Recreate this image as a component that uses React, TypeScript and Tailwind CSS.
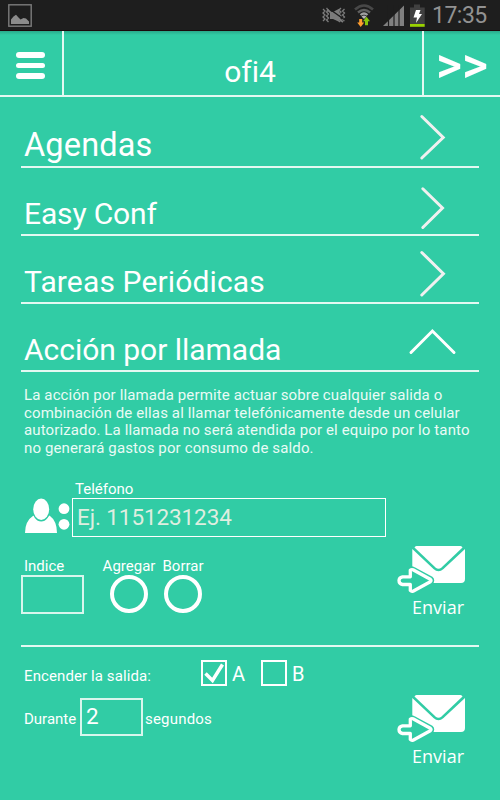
import clsx from "clsx";

const sections = [
  {
    name: "Agendas",
    row: "h-[71px] pb-[3px]",
    text: "text-[32.5px] tracking-[0.15px]",
    icon: "M171.8 17.5 193.2 38.5 171.8 59",
    open: false,
  },
  {
    name: "Easy Conf",
    row: "h-[68px] pb-[2px]",
    text: "text-[30px] tracking-[-0.15px]",
    icon: "M172.8 20.8 192.5 40 172.8 59.5",
    open: false,
  },
  {
    name: "Tareas Periódicas",
    row: "h-[68px] pb-[2px]",
    text: "text-[30px] tracking-[0.14px]",
    icon: "M171.8 16.5 193.4 37.7 171.8 59",
    open: false,
  },
  {
    name: "Acción por llamada",
    row: "h-[68px] pb-[2px]",
    text: "text-[30px] tracking-[-0.02px]",
    icon: "M161 48.5 182.4 27 204 48.5",
    open: true,
  },
];

function StatusBar() {
  return (
    <div className="flex h-[31px] items-start border-b border-[#1b080c] bg-[#1e1e1e] pl-2">
      <svg className="mt-1 h-[23px] w-6" viewBox="0 0 24 23">
        <rect x="0.8" y="0.8" width="22.4" height="21.4" fill="#1e1e1e" stroke="#7c7c7c" strokeWidth="1.4" />
        <path d="M3 20V15.5L5.5 12.5 8 10.8 10.5 13.5 12.5 15.5 15.5 14 18 14.5 21 17.5V20Z" fill="#8b8b8b" />
      </svg>
      <svg className="ml-auto mt-[3px] h-[26px] w-[103px]" viewBox="322 3 103 26">
        {/* vibrate */}
        <g fill="none" stroke="#7c7c7c" strokeWidth="1.3">
          <path d="M323 9l2 2-2 2 2 2-2 2 2 2-2 2M326.5 8l2 2-2 2 2 2-2 2 2 2-2 2 2 2" />
          <path d="M344.5 9l-2 2 2 2-2 2 2 2-2 2 2 2M341 8l-2 2 2 2-2 2 2 2-2 2 2 2-2 2" />
        </g>
        <path d="M330 12h3l6.5-3.5v13.500L333 19h-3Z" fill="#7c7c7c" />
        <path d="M328 8 345 20" stroke="#1e1e1e" strokeWidth="1.4" />
        <path d="M327 9.5 343 22" stroke="#7c7c7c" strokeWidth="1.8" />
        {/* wifi */}
        <g fill="none">
          <path d="M355 9.5q9-8 18 0" stroke="#484848" strokeWidth="2.6" />
          <path d="M358 12.5q6-5 12 0" stroke="#606060" strokeWidth="2.4" />
          <path d="M360.5 15q3.5-3 7 0" stroke="#a0a0a0" strokeWidth="2.2" />
        </g>
        <path d="M361.5 16.5q2.5-2 5 0L364 19Z" fill="#b4b4b4" />
        <path d="M359.2 19h3v3.5h2l-3.5 4.5-3.5-4.5h2Z" fill="#ff9d2e" />
        <path d="M365 25.2v-4h-2l3.5-4.4 3.5 4.4h-2v4Z" fill="#86c40b" />
        {/* signal */}
        <path d="M383 26 404 5.5V26Z" fill="#808080" />
        <path d="M388.5 5V26M394 5V26M399 5V26" stroke="#1e1e1e" strokeWidth="1.2" />
        {/* battery */}
        <path d="M414 4.5h6v3h4.7v16.500h-14.700V7.500h4Z" fill="#404040" />
        <path d="M410 24h14.700v2.800h-14.700Z" fill="#99d100" />
        <path d="M416 10h4.500l-1.500 4h3l-6 9 1-5.500h-3.500Z" fill="#fff" />
      </svg>
      <span className="ml-[7px] mr-[13px] mt-[2px] w-[55px] text-[23px] leading-[27px] tracking-[-0.5px] text-[#929292]">
        17:35
      </span>
    </div>
  );
}

function Header() {
  return (
    <header className="flex h-[66px] border-b-2 border-[#e3f9f2] bg-linear-to-b from-[#2aa98b] from-0% to-[#31cca5] to-[4px]">
      <button className="flex w-[64px] flex-col gap-[5px] border-r-2 border-[#e3f9f2] pl-4 pt-[21px]">
        <span className="h-[5.5px] w-[29px] rounded-full bg-white" />
        <span className="h-[5.5px] w-[29px] rounded-full bg-white" />
        <span className="h-[5.5px] w-[29px] rounded-full bg-white" />
      </button>
      <h1 className="flex-1 pl-[14px] pt-[23px] text-center text-[30px] leading-9 [font-variant-ligatures:none]">
        ofi4
      </h1>
      <button className="w-[78px] border-l-2 border-[#e3f9f2] pt-[3px] text-center text-[50px] font-medium leading-[60px]">
        &gt;&gt;
      </button>
    </header>
  );
}

function SendButton() {
  return (
    <button className="flex w-[70px] flex-col items-end">
      <svg className="h-[49px] w-[70px]" viewBox="397 545 70 49">
        <path d="M412.3 549 433.5 569q5 4.5 10 0L465 549V579q0 4-4 4H412.3Z" fill="#fff" />
        <path d="M414.5 547.5Q415 546 416.5 546H460.5Q462 546 462.5 547.5L441.5 567.5q-3 2.5-6 0Z" fill="#fff" />
        <path
          d="M401.5 577H408.5V570.5Q410.5 567.5 413.5 569.5L430.5 578.5Q433 580.5 430.5 582.5L413.5 591.5Q410.5 592.5 409 590V585H401.5Q398.5 584 398.5 581 398.5 578 401.5 577Z"
          fill="#31cca5"
          stroke="#31cca5"
          strokeWidth="5"
        />
        <path
          d="M402.5 576.8H410.3V570.300Q411.500 569.200 413 569.800L430.300 579.200Q431.800 580.500 430.300 581.800L413 591.200Q411.500 591.800 410.300 590.500V584.500H402.500Q399 584 399 580.600 399 577.500 402.500 576.800Z"
          fill="#31cca5"
          stroke="#fff"
          strokeWidth="3.3"
          strokeLinejoin="round"
        />
      </svg>
      <span className="mr-[3px] mt-px font-['Open_Sans'] text-[18px] leading-6">Enviar</span>
    </button>
  );
}

function Checkbox({ label, checked }: { label: string; checked: boolean }) {
  return (
    <label className="flex items-center gap-[5px]">
      <span className="flex h-[26px] w-[26px] items-center justify-center border-[2.5px] border-white">
        {checked && (
          <svg className="h-[22px] w-[22px] shrink-0" viewBox="0 0 22 22">
            <path d="M2.5 11.5 9.5 18.5 19.5 2.5" fill="none" stroke="#fff" strokeWidth="3.5" />
          </svg>
        )}
      </span>
      <span className="pt-[2px] text-[20px] leading-6">{label}</span>
    </label>
  );
}

export default function App() {
  return (
    <div className="flex h-[800px] w-[500px] flex-col overflow-hidden bg-[#31cca5] font-[Roboto,sans-serif] text-white">
      <StatusBar />
      <Header />

      <main className="flex flex-col px-[21px]">
        {sections.map((section) => (
          <div
            key={section.name}
            className={clsx("flex items-end justify-between border-b-2 border-[#e3f9f2] pl-[3px] pr-[10px]", section.row)}
          >
            <h2 className={clsx("whitespace-nowrap leading-9", section.text)}>{section.name}</h2>
            <svg className="-mb-[4px] h-[68px] w-[70px] shrink-0" viewBox="149 0 70 68">
              <path
                d={section.icon}
                fill="none"
                stroke={section.open ? "#fff" : "#f0f0f0"}
                strokeWidth="3"
                strokeLinecap="round"
              />
            </svg>
          </div>
        ))}

        <p className="mt-[15px] whitespace-nowrap pl-[3px] text-[15px] leading-[17.5px] tracking-[0.13px] text-[#eafbf5]">
          La acción por llamada permite actuar sobre cualquier salida o
          <br />
          combinación de ellas al llamar telefónicamente desde un celular
          <br />
          autorizado. La llamada no será atendida por el equipo por lo tanto
          <br />
          no generará gastos por consumo de saldo.
        </p>

        <div className="mt-[23px] flex h-[57px] items-end pl-1">
          <svg className="mb-[3px] h-9 w-[47px]" viewBox="25 498 47 36">
            <path d="M25 533q0-12 8.500-17.500Q41 525 49.500 515.500 57 521 57 533Z" fill="#fff" />
            <ellipse cx="41.2" cy="509.5" rx="9" ry="12" fill="#31cca5" />
            <ellipse cx="41.2" cy="509.2" rx="8" ry="10.7" fill="#fff" />
            <circle cx="64" cy="508.7" r="5.4" fill="#fff" />
            <circle cx="64" cy="524.3" r="5.4" fill="#fff" />
          </svg>
          <label className="flex flex-col">
            <span className="pl-[3px] text-[15px] leading-[18px]">Teléfono</span>
            <span className="flex h-[39px] w-[314px] items-center border border-white pl-1 text-[22.5px] tracking-[-0.1px] text-[#dfeee0]">
              Ej. 1151231234
            </span>
          </label>
        </div>

        <div className="mt-[9px] flex h-[74px] items-start">
          <label className="mt-[11px] flex flex-col">
            <span className="pl-[3px] text-[15px] leading-[18px]">Indice</span>
            <span className="h-[39px] w-[63px] border-2 border-[#d8f6ed]" />
          </label>
          <label className="ml-[18px] mt-[11px] flex w-[54px] flex-col items-center text-[15px] leading-[18px]">
            Agregar
            <span className="h-[38px] w-[38px] rounded-full border-4 border-white" />
          </label>
          <label className="mt-[11px] flex w-[54px] flex-col items-center text-[15px] leading-[18px]">
            Borrar
            <span className="h-[38px] w-[38px] rounded-full border-4 border-white" />
          </label>
          <div className="-mt-px ml-auto mr-3">
            <SendButton />
          </div>
        </div>

        <hr className="mt-[25px] border-t-2 border-[#e3f9f2]" />

        <div className="flex justify-between">
          <div className="pt-[13px]">
            <div className="flex h-[26px] items-center">
              <span className="w-[180px] pl-[3px] pt-[5px] text-[15px] leading-[18px] tracking-[0.1px]">
                Encender la salida:
              </span>
              <Checkbox label="A" checked />
              <span className="w-4" />
              <Checkbox label="B" checked={false} />
            </div>
            <div className="mt-3 flex h-[38px] items-center text-[15px]">
              <span className="w-[59px] pl-[3px] pt-1">Durante</span>
              <span className="flex h-[38px] w-[63px] items-center border-2 border-[#d8f6ed] pl-1 text-[22.5px]">
                2
              </span>
              <span className="pl-[2px] pt-1 tracking-[0.2px]">segundos</span>
            </div>
          </div>
          <div className="mr-3 mt-[47px]">
            <SendButton />
          </div>
        </div>
      </main>
    </div>
  );
}
